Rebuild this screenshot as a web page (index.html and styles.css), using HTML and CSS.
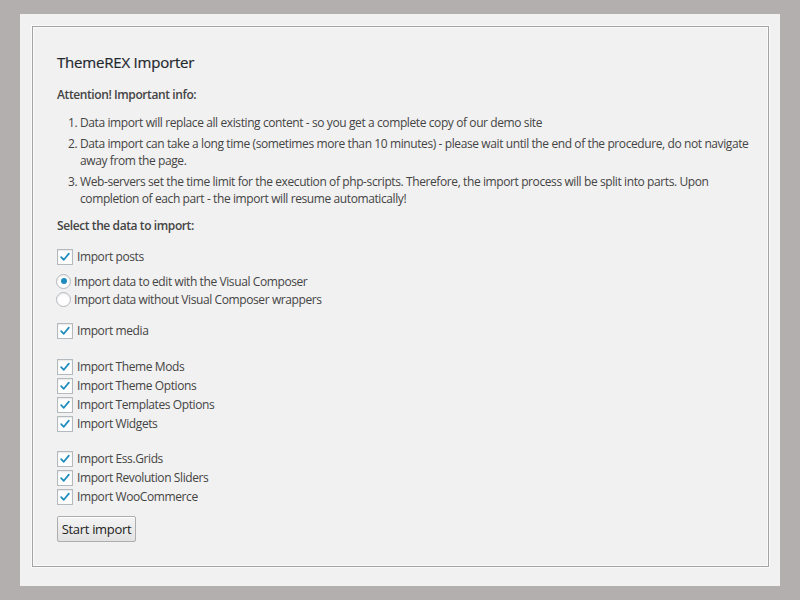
FILE: index.html
```html
<!DOCTYPE html>
<html>
<head>
<meta charset="utf-8">
<link rel="stylesheet" href="styles.css">
</head>
<body>
<div class="panel">
  <div class="box">
    <h2 class="title">ThemeREX Importer</h2>
    <p class="attn">Attention! Important info:</p>
    <ol class="info">
      <li>Data import will replace all existing content - so you get a complete copy of our demo site</li>
      <li>Data import can take a long time (sometimes more than 10 minutes) - please wait until the end of the procedure, do not navigate away from the page.</li>
      <li>Web-servers set the time limit for the execution of php-scripts. Therefore, the import process will be split into parts. Upon<br>completion of each part - the import will resume automatically!</li>
    </ol>
    <p class="select">Select the data to import:</p>

    <div class="group g-posts">
      <label class="row"><span class="cb"><svg viewBox="0 0 16 16"><path d="M3.6 8.2 L6.6 11.2 L12.4 4.2"/></svg></span>Import posts</label>
    </div>
    <div class="group g-radio">
      <label class="rrow"><span class="rb on"></span>Import data to edit with the Visual Composer</label>
      <label class="rrow"><span class="rb"></span>Import data without Visual Composer wrappers</label>
    </div>
    <div class="group g-media">
      <label class="row"><span class="cb"><svg viewBox="0 0 16 16"><path d="M3.6 8.2 L6.6 11.2 L12.4 4.2"/></svg></span>Import media</label>
    </div>
    <div class="group g-theme">
      <label class="row"><span class="cb"><svg viewBox="0 0 16 16"><path d="M3.6 8.2 L6.6 11.2 L12.4 4.2"/></svg></span>Import Theme Mods</label>
      <label class="row"><span class="cb"><svg viewBox="0 0 16 16"><path d="M3.6 8.2 L6.6 11.2 L12.4 4.2"/></svg></span>Import Theme Options</label>
      <label class="row"><span class="cb"><svg viewBox="0 0 16 16"><path d="M3.6 8.2 L6.6 11.2 L12.4 4.2"/></svg></span>Import Templates Options</label>
      <label class="row"><span class="cb"><svg viewBox="0 0 16 16"><path d="M3.6 8.2 L6.6 11.2 L12.4 4.2"/></svg></span>Import Widgets</label>
    </div>
    <div class="group g-plugins">
      <label class="row"><span class="cb"><svg viewBox="0 0 16 16"><path d="M3.6 8.2 L6.6 11.2 L12.4 4.2"/></svg></span>Import Ess.Grids</label>
      <label class="row"><span class="cb"><svg viewBox="0 0 16 16"><path d="M3.6 8.2 L6.6 11.2 L12.4 4.2"/></svg></span>Import Revolution Sliders</label>
      <label class="row"><span class="cb"><svg viewBox="0 0 16 16"><path d="M3.6 8.2 L6.6 11.2 L12.4 4.2"/></svg></span>Import WooCommerce</label>
    </div>
    <div class="actions">
      <button class="btn" type="button">Start import</button>
    </div>
  </div>
</div>
</body>
</html>
```

FILE: styles.css
```css
* { box-sizing: border-box; }
html, body { margin: 0; padding: 0; }
body {
  background: #b4afaf;
  padding: 14px 20px;
  font-family: "Open Sans", "Noto Sans", "DejaVu Sans", sans-serif;
  font-size: 12px;
  letter-spacing: -0.4px;
  color: #444;
  width: 800px;
  height: 600px;
  overflow: hidden;
}
.panel {
  background: #f1f1f1;
  height: 572px;
  padding: 12px 11px 19px 12px;
}
.box {
  height: 100%;
  border: 1px solid #a3a3a3;
  box-shadow: 0 0 0 1px #fbfbfb, inset 0 0 0 1px #fbfbfb;
  padding: 25px 14px 0 24px;
}
.title {
  margin: 0;
  font-size: 15px;
  font-weight: 400;
  letter-spacing: -0.2px;
  line-height: 20px;
  color: #23282d;
  -webkit-text-stroke: 0.2px #23282d;
}
.attn, .select {
  margin: 0;
  font-weight: 600;
  line-height: 18px;
}
.attn { margin-top: 14px; }
.info {
  margin: 10px 0 0 0;
  padding-left: 23px;
  line-height: 17px;
}
.info li { margin-bottom: 4px; padding-left: 0; }
.info li:last-child { margin-bottom: 0; }
.select { margin-top: 10px; }
.group { display: flex; flex-direction: column; }
.g-posts { margin-top: 12px; }
.g-radio { margin-top: 6px; }
.g-media { margin-top: 13px; }
.g-theme { margin-top: 17px; }
.g-plugins { margin-top: 16px; }
.row {
  display: flex;
  align-items: center;
  height: 19px;
}
.rrow {
  display: flex;
  align-items: center;
  height: 18px;
}
.cb {
  width: 16px;
  height: 16px;
  border: 1px solid #b4b9be;
  background: #fff;
  box-shadow: inset 0 1px 2px rgba(0,0,0,0.1);
  margin-right: 4px;
  flex: none;
  display: flex;
}
.cb svg { width: 100%; height: 100%; }
.cb path {
  fill: none;
  stroke: #1e8cbe;
  stroke-width: 2;
  stroke-linecap: round;
  stroke-linejoin: round;
}
.rb {
  width: 15px;
  height: 15px;
  border: 1px solid #b4b9be;
  border-radius: 50%;
  background: #fff;
  box-shadow: inset 0 1px 2px rgba(0,0,0,0.1);
  margin-right: 3px;
  margin-left: -1px;
  flex: none;
  display: flex;
  align-items: center;
  justify-content: center;
}
.rb.on::after {
  content: "";
  width: 6px;
  height: 6px;
  border-radius: 50%;
  background: #1e8cbe;
}
.actions { margin-top: 10px; }
.btn {
  font-family: inherit;
  font-size: 13px;
  letter-spacing: -0.3px;
  color: #222;
  height: 26px;
  width: 79px;
  padding: 0;
  border: 1px solid #adadad;
  border-radius: 2px;
  background: linear-gradient(#f4f4f4, #e2e2e2);
  box-shadow: inset 0 1px 0 #fff;
}
```
